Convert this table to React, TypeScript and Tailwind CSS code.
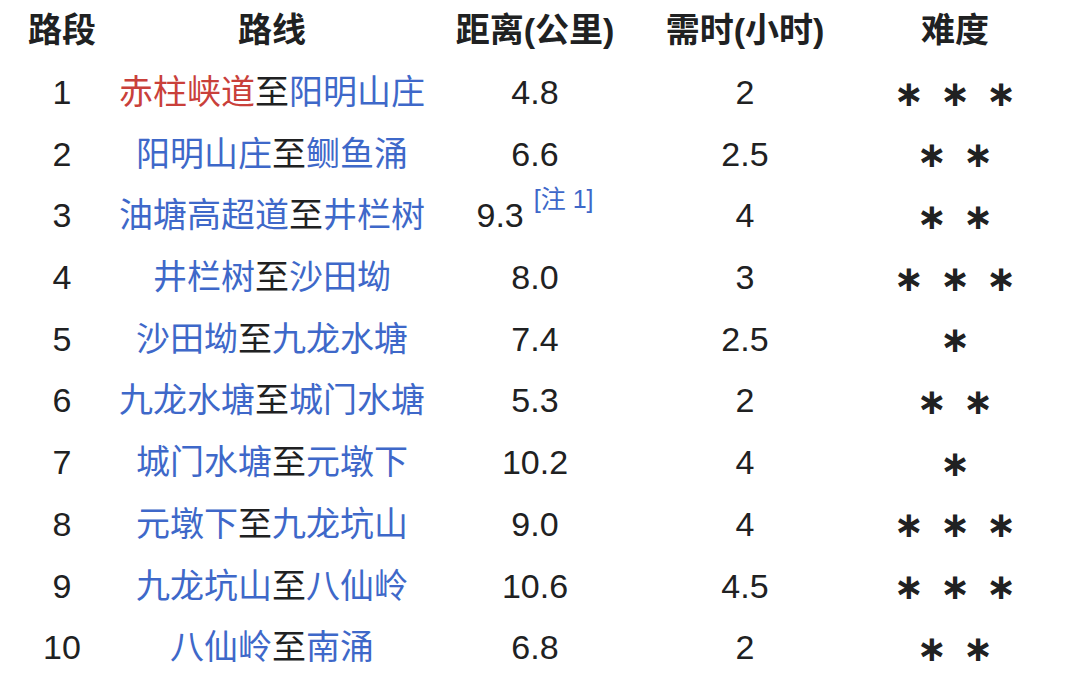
const RED = "text-[#c9403a]";
const BLUE = "text-[#3e68c9]";

type Seg = { t: string; c?: "red" | "blue" };

const rows: {
  n: number;
  route: Seg[];
  dist: string;
  note?: string;
  time: string;
  level: number;
}[] = [
  { n: 1, route: [{ t: "赤柱峡道", c: "red" }, { t: "至" }, { t: "阳明山庄", c: "blue" }], dist: "4.8", time: "2", level: 3 },
  { n: 2, route: [{ t: "阳明山庄", c: "blue" }, { t: "至" }, { t: "鲗鱼涌", c: "blue" }], dist: "6.6", time: "2.5", level: 2 },
  { n: 3, route: [{ t: "油塘高超道", c: "blue" }, { t: "至" }, { t: "井栏树", c: "blue" }], dist: "9.3", note: "[注 1]", time: "4", level: 2 },
  { n: 4, route: [{ t: "井栏树", c: "blue" }, { t: "至" }, { t: "沙田坳", c: "blue" }], dist: "8.0", time: "3", level: 3 },
  { n: 5, route: [{ t: "沙田坳", c: "blue" }, { t: "至" }, { t: "九龙水塘", c: "blue" }], dist: "7.4", time: "2.5", level: 1 },
  { n: 6, route: [{ t: "九龙水塘", c: "blue" }, { t: "至" }, { t: "城门水塘", c: "blue" }], dist: "5.3", time: "2", level: 2 },
  { n: 7, route: [{ t: "城门水塘", c: "blue" }, { t: "至" }, { t: "元墩下", c: "blue" }], dist: "10.2", time: "4", level: 1 },
  { n: 8, route: [{ t: "元墩下", c: "blue" }, { t: "至" }, { t: "九龙坑山", c: "blue" }], dist: "9.0", time: "4", level: 3 },
  { n: 9, route: [{ t: "九龙坑山", c: "blue" }, { t: "至" }, { t: "八仙岭", c: "blue" }], dist: "10.6", time: "4.5", level: 3 },
  { n: 10, route: [{ t: "八仙岭", c: "blue" }, { t: "至" }, { t: "南涌", c: "blue" }], dist: "6.8", time: "2", level: 2 },
];

const cell = "flex items-center justify-center whitespace-nowrap";

function Stars({ count }: { count: number }) {
  return (
    <div className="flex items-center gap-[16px]">
      {Array.from({ length: count }).map((_, i) => (
        <span key={i} className="font-['DejaVu_Sans',sans-serif] text-[36px] leading-none font-bold translate-y-[1px]">
          ∗
        </span>
      ))}
    </div>
  );
}

export default function App() {
  return (
    <div className="h-[693px] w-[1080px] bg-white text-[#202122] font-['Liberation_Sans','Noto_Sans_CJK_SC',sans-serif] text-[34px]">
      <div className="grid grid-cols-[124px_296px_230px_190px_230px] auto-rows-[61.7px]">
        <div className={`${cell} font-bold`}>路段</div>
        <div className={`${cell} font-bold`}>路线</div>
        <div className={`${cell} font-bold`}>距离(公里)</div>
        <div className={`${cell} font-bold`}>需时(小时)</div>
        <div className={`${cell} font-bold`}>难度</div>

        {rows.map((r) => (
          <div key={r.n} className="contents">
            <div className={cell}>{r.n}</div>
            <div className={cell}>
              {r.route.map((s, i) => (
                <span key={i} className={s.c === "red" ? RED : s.c === "blue" ? BLUE : ""}>
                  {s.t}
                </span>
              ))}
            </div>
            <div className={cell}>
              {r.dist}
              {r.note && (
                <sup className={`${BLUE} ml-[10px] text-[25px] -translate-y-[4px]`}>{r.note}</sup>
              )}
            </div>
            <div className={cell}>{r.time}</div>
            <div className={cell}>
              <Stars count={r.level} />
            </div>
          </div>
        ))}
      </div>
    </div>
  );
}
